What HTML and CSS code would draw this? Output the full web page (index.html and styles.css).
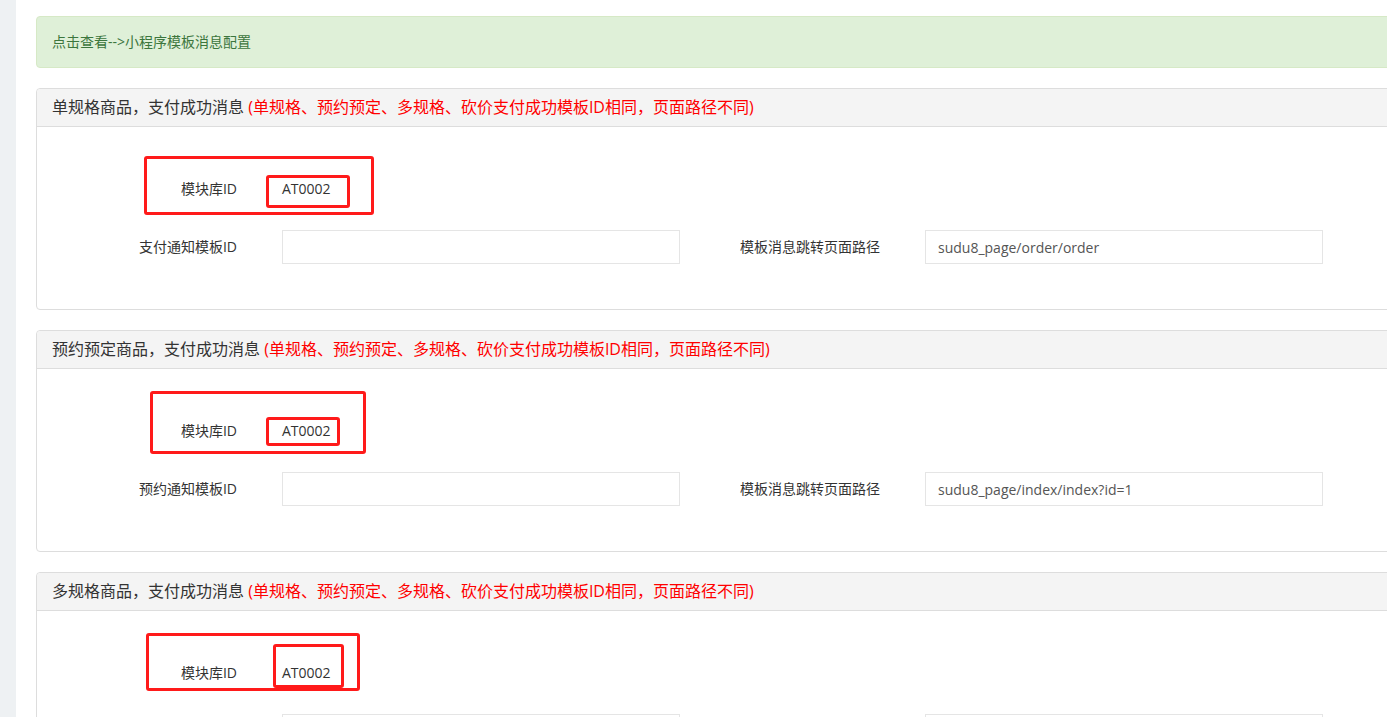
FILE: index.html
```html
<!DOCTYPE html>
<html lang="zh-CN">
<head>
    <meta charset="UTF-8">
    <meta name="viewport" content="width=device-width, initial-scale=1.0">
    <title>模板消息配置</title>
    <link rel="stylesheet" href="styles.css">
</head>
<body>
    <div class="layout">
        <div class="side-strip"></div>
        <div class="main">
            <div class="alert-success">点击查看--&gt;小程序模板消息配置</div>

            <div class="panel">
                <div class="panel-heading">单规格商品，支付成功消息 <span class="note">(单规格、预约预定、多规格、砍价支付成功模板ID相同，页面路径不同)</span></div>
                <div class="panel-body">
                    <div class="form-row">
                        <label class="label-left">模块库ID</label>
                        <div class="static">AT0002</div>
                    </div>
                    <div class="form-row">
                        <label class="label-left">支付通知模板ID</label>
                        <input class="form-control" type="text" value="">
                        <label class="label-right">模板消息跳转页面路径</label>
                        <input class="form-control" type="text" value="sudu8_page/order/order">
                    </div>
                </div>
                <div class="mark p1-outer"></div>
                <div class="mark p1-inner"></div>
            </div>

            <div class="panel">
                <div class="panel-heading">预约预定商品，支付成功消息 <span class="note">(单规格、预约预定、多规格、砍价支付成功模板ID相同，页面路径不同)</span></div>
                <div class="panel-body">
                    <div class="form-row">
                        <label class="label-left">模块库ID</label>
                        <div class="static">AT0002</div>
                    </div>
                    <div class="form-row">
                        <label class="label-left">预约通知模板ID</label>
                        <input class="form-control" type="text" value="">
                        <label class="label-right">模板消息跳转页面路径</label>
                        <input class="form-control" type="text" value="sudu8_page/index/index?id=1">
                    </div>
                </div>
                <div class="mark p2-outer"></div>
                <div class="mark p2-inner"></div>
            </div>

            <div class="panel">
                <div class="panel-heading">多规格商品，支付成功消息 <span class="note">(单规格、预约预定、多规格、砍价支付成功模板ID相同，页面路径不同)</span></div>
                <div class="panel-body">
                    <div class="form-row">
                        <label class="label-left">模块库ID</label>
                        <div class="static">AT0002</div>
                    </div>
                    <div class="form-row">
                        <label class="label-left">多规格通知模板ID</label>
                        <input class="form-control" type="text" value="">
                        <label class="label-right">模板消息跳转页面路径</label>
                        <input class="form-control" type="text" value="sudu8_page/order/order">
                    </div>
                </div>
                <div class="mark p3-outer"></div>
                <div class="mark p3-inner"></div>
            </div>
        </div>
    </div>
</body>
</html>
```

FILE: styles.css
```css
body {
    margin: 0;
    padding: 0;
    font-family: "Open Sans", "Noto Sans CJK SC", sans-serif;
    font-size: 14px;
    color: #333;
    background-color: #fff;
    overflow: hidden;
}

.layout {
    display: flex;
    min-height: 100vh;
}

.side-strip {
    width: 16px;
    flex-shrink: 0;
    background-color: #eef1f3;
}

.main {
    flex-shrink: 0;
    width: 1420px;
    padding: 16px 0 0 20px;
}

.alert-success {
    background-color: #dff0d8;
    border: 1px solid #d6e9c6;
    border-radius: 4px;
    color: #3c763d;
    padding: 15px;
    line-height: 20px;
    font-size: 14px;
    margin-bottom: 20px;
}

.panel {
    position: relative;
    border: 1px solid #ddd;
    border-radius: 4px;
    margin-bottom: 20px;
    background-color: #fff;
}

.panel-heading {
    height: 37px;
    line-height: 37px;
    padding: 0 15px;
    background-color: #f4f4f4;
    border-bottom: 1px solid #ddd;
    font-size: 16px;
    color: #333;
    border-radius: 4px 4px 0 0;
}

.panel-heading .note {
    color: #ff0000;
}

.panel-body {
    padding: 45px 15px;
    display: flex;
    flex-direction: column;
    gap: 24px;
}

.form-row {
    display: flex;
    align-items: center;
    height: 34px;
}

.label-left {
    width: 185px;
    text-align: right;
    margin-right: 45px;
    line-height: 20px;
}

.label-right {
    width: 200px;
    text-align: right;
    margin-right: 45px;
    line-height: 20px;
}

.static {
    line-height: 20px;
    color: #333;
}

.form-control {
    box-sizing: border-box;
    width: 398px;
    height: 34px;
    padding: 0 12px;
    border: 1px solid #e5e5e5;
    border-radius: 0;
    font-family: inherit;
    font-size: 14px;
    color: #555;
    background-color: #fff;
    outline: none;
    margin: 0;
}

/* red annotation boxes drawn over the screenshot */
.mark {
    position: absolute;
    box-sizing: border-box;
    border: 3px solid #ff1a1a;
    border-radius: 3px;
    pointer-events: none;
}

.p1-outer { left: 107px; top: 67px; width: 230px; height: 59px; }
.p1-inner { left: 229px; top: 86px; width: 84px; height: 33px; }

.p2-outer { left: 113px; top: 60px; width: 216px; height: 63px; }
.p2-inner { left: 229px; top: 86px; width: 74px; height: 29px; }

.p3-outer { left: 109px; top: 60px; width: 214px; height: 58px; }
.p3-inner { left: 236px; top: 71px; width: 71px; height: 44px; }
```
